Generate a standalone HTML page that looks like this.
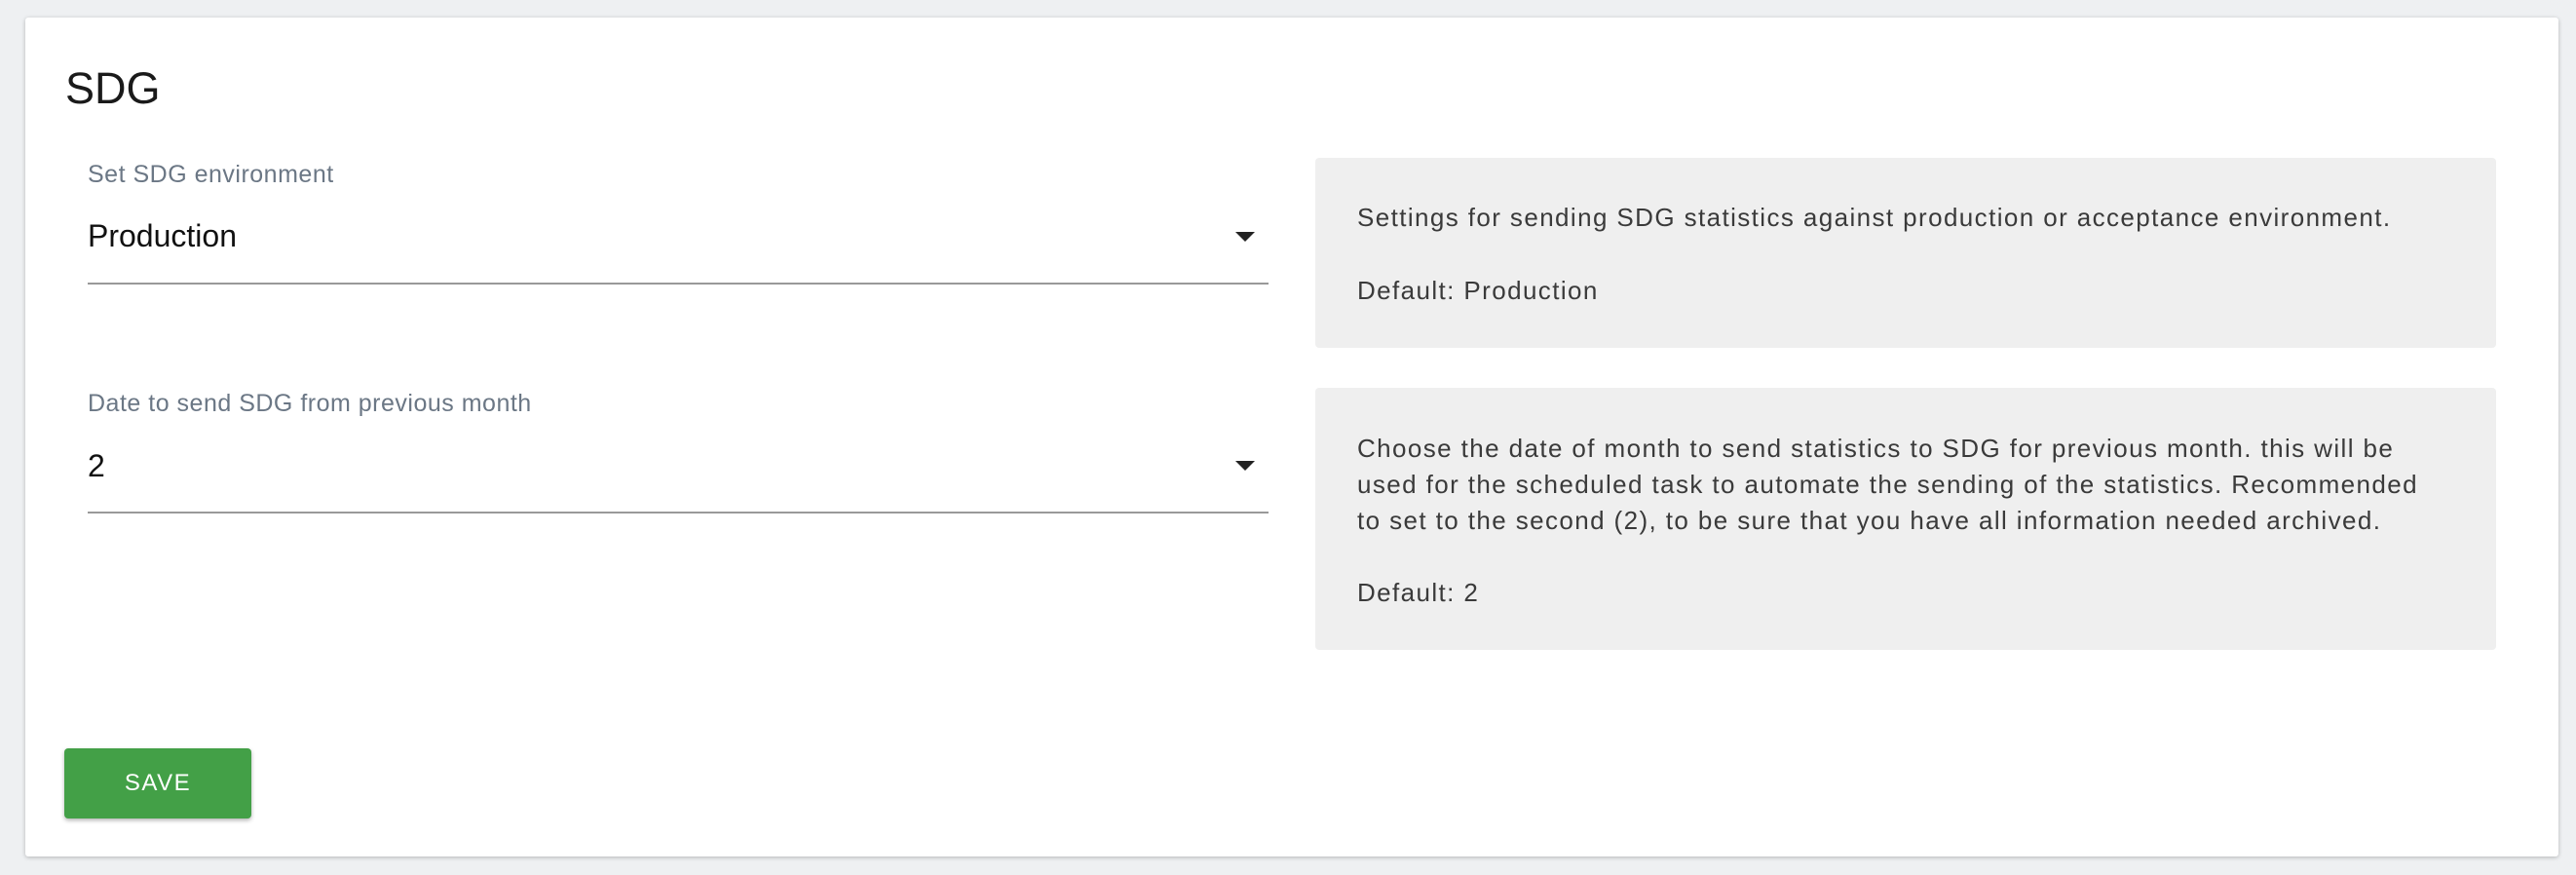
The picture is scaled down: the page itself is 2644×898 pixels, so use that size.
<!DOCTYPE html>
<html><head><style>
body{margin:0;width:2644px;height:898px;background:#eef0f2;font-family:"Liberation Sans",sans-serif;position:relative;overflow:hidden}
.card{position:absolute;left:26px;top:18px;width:2600px;height:861px;background:#fff;border-radius:3px;box-shadow:0 1px 4px rgba(0,0,0,.25)}
.abs{position:absolute;white-space:nowrap}
h1{position:absolute;left:67px;top:64px;margin:0;font-size:45px;font-weight:400;color:#1a1a1a;line-height:54px}
.lbl{color:#6b7785;font-size:25px;letter-spacing:0.5px}
.val{color:#111;font-size:32px}
.line{position:absolute;left:90px;width:1212px;height:2px;background:#999}
.arrow{position:absolute;width:0;height:0;border-left:10px solid transparent;border-right:10px solid transparent;border-top:10px solid #222}
.box{position:absolute;left:1350px;width:1212px;background:#efefef;border-radius:4px;color:#3a3a3a;font-size:26px;line-height:37px;letter-spacing:1.4px}
.btn{position:absolute;left:66px;top:768px;width:192px;height:72px;background:#43a047;border-radius:4px;box-shadow:0 2px 4px rgba(0,0,0,.3);color:#fff;font-size:24px;letter-spacing:1.5px;text-align:center;line-height:72px}
</style></head><body>
<div class="card"></div>
<h1>SDG</h1>
<div class="abs lbl" style="left:90px;top:165px">Set SDG environment</div>
<div class="abs val" style="left:90px;top:224px">Production</div>
<div class="arrow" style="left:1268px;top:238px"></div>
<div class="line" style="top:290px"></div>
<div class="abs lbl" style="left:90px;top:400px">Date to send SDG from previous month</div>
<div class="abs val" style="left:90px;top:460px">2</div>
<div class="arrow" style="left:1268px;top:473px"></div>
<div class="line" style="top:525px"></div>
<div class="box" style="top:162px;height:195px">
<div class="abs" style="left:43px;top:43px">Settings for sending SDG statistics against production or acceptance environment.</div>
<div class="abs" style="left:43px;top:118px">Default: Production</div>
</div>
<div class="box" style="top:398px;height:269px">
<div class="abs" style="left:43px;top:44px">Choose the date of month to send statistics to SDG for previous month. this will be<br>used for the scheduled task to automate the sending of the statistics. Recommended<br>to set to the second (2), to be sure that you have all information needed archived.</div>
<div class="abs" style="left:43px;top:192px">Default: 2</div>
</div>
<div class="btn">SAVE</div>
</body></html>
